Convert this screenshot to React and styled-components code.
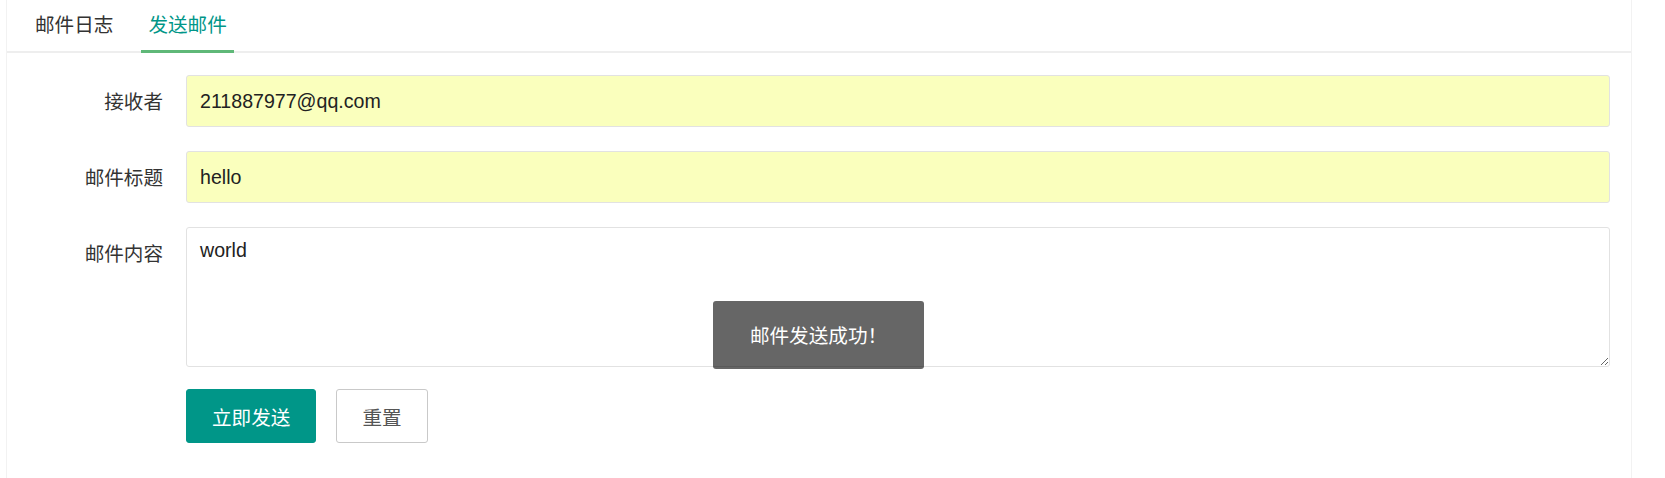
import React from 'react';
import styled, { createGlobalStyle } from 'styled-components';

const GlobalStyle = createGlobalStyle`
  html, body {
    margin: 0;
    padding: 0;
    background: #fff;
  }
  body {
    font-family: "Liberation Sans", "Noto Sans CJK SC", Arial, sans-serif;
    color: #333;
  }
  * { box-sizing: border-box; }
`;

const Page = styled.div`
  padding: 0 33px 0 6px;
`;

const Card = styled.div`
  min-height: 478px;
  border-left: 1px solid #f2f2f2;
  border-right: 1px solid #f2f2f2;
  background: #fff;
`;

const TabBar = styled.ul`
  display: flex;
  gap: 21px;
  height: 53px;
  margin: 0;
  padding: 0 0 0 21px;
  list-style: none;
  border-bottom: 2px solid #eeeeee;
`;

const Tab = styled.li`
  position: relative;
  padding: 0 7px;
  line-height: 48px;
  font-size: 19.6px;
  font-family: "Noto Sans CJK SC", sans-serif;
  color: ${(p) => (p.$active ? '#009688' : '#333')};
  cursor: pointer;

  &::after {
    content: '';
    display: ${(p) => (p.$active ? 'block' : 'none')};
    position: absolute;
    left: 0;
    right: 0;
    bottom: -2px;
    height: 3px;
    background: #5fb878;
  }
`;

const Form = styled.form`
  display: flex;
  flex-direction: column;
  gap: 24px;
  padding: 22px 21px 0 0;
`;

const Row = styled.div`
  display: flex;
  align-items: flex-start;
`;

const Label = styled.label`
  flex: 0 0 179px;
  padding-right: 23px;
  text-align: right;
  line-height: 52px;
  font-size: 19.6px;
  font-family: "Noto Sans CJK SC", sans-serif;
  color: #333;
`;

const Field = styled.input`
  flex: 1;
  height: 52px;
  padding: 0 13px;
  border: 1px solid #e2e2e2;
  border-radius: 3px;
  background: #faffbd;
  font-family: "Liberation Sans", "Noto Sans CJK SC", sans-serif;
  font-size: 19.6px;
  color: #222;
  outline: none;
`;

const Area = styled.textarea`
  flex: 1;
  height: 140px;
  padding: 8px 13px;
  border: 1px solid #e2e2e2;
  border-radius: 3px;
  background: #fff;
  font-family: "Liberation Sans", "Noto Sans CJK SC", sans-serif;
  font-size: 19.6px;
  line-height: 28px;
  color: #222;
  resize: vertical;
  outline: none;
`;

const Actions = styled.div`
  display: flex;
  gap: 20px;
  margin-top: -2px;
  padding-left: 179px;
`;

const Button = styled.button`
  height: 54px;
  padding: 0 25px;
  border-radius: 3px;
  font-family: "Noto Sans CJK SC", sans-serif;
  font-size: 19.6px;
  cursor: pointer;
  border: 1px solid ${(p) => (p.$primary ? '#009688' : '#c9c9c9')};
  background: ${(p) => (p.$primary ? '#009688' : '#fff')};
  color: ${(p) => (p.$primary ? '#fff' : '#555')};
`;

const Toast = styled.div`
  position: absolute;
  left: 713px;
  top: 301px;
  width: 211px;
  height: 68px;
  line-height: 68px;
  text-align: center;
  border-radius: 3px;
  background: rgba(0, 0, 0, 0.6);
  color: #fff;
  font-family: "Noto Sans CJK SC", sans-serif;
  font-size: 19.6px;
`;

export default function App() {
  return (
    <>
      <GlobalStyle />
      <Page>
        <Card>
          <TabBar>
            <Tab>邮件日志</Tab>
            <Tab $active>发送邮件</Tab>
          </TabBar>
          <Form onSubmit={(e) => e.preventDefault()}>
            <Row>
              <Label>接收者</Label>
              <Field defaultValue="211887977@qq.com" />
            </Row>
            <Row>
              <Label>邮件标题</Label>
              <Field defaultValue="hello" />
            </Row>
            <Row>
              <Label>邮件内容</Label>
              <Area defaultValue="world" />
            </Row>
            <Actions>
              <Button $primary type="submit">立即发送</Button>
              <Button type="reset">重置</Button>
            </Actions>
          </Form>
        </Card>
      </Page>
      <Toast>邮件发送成功！</Toast>
    </>
  );
}
